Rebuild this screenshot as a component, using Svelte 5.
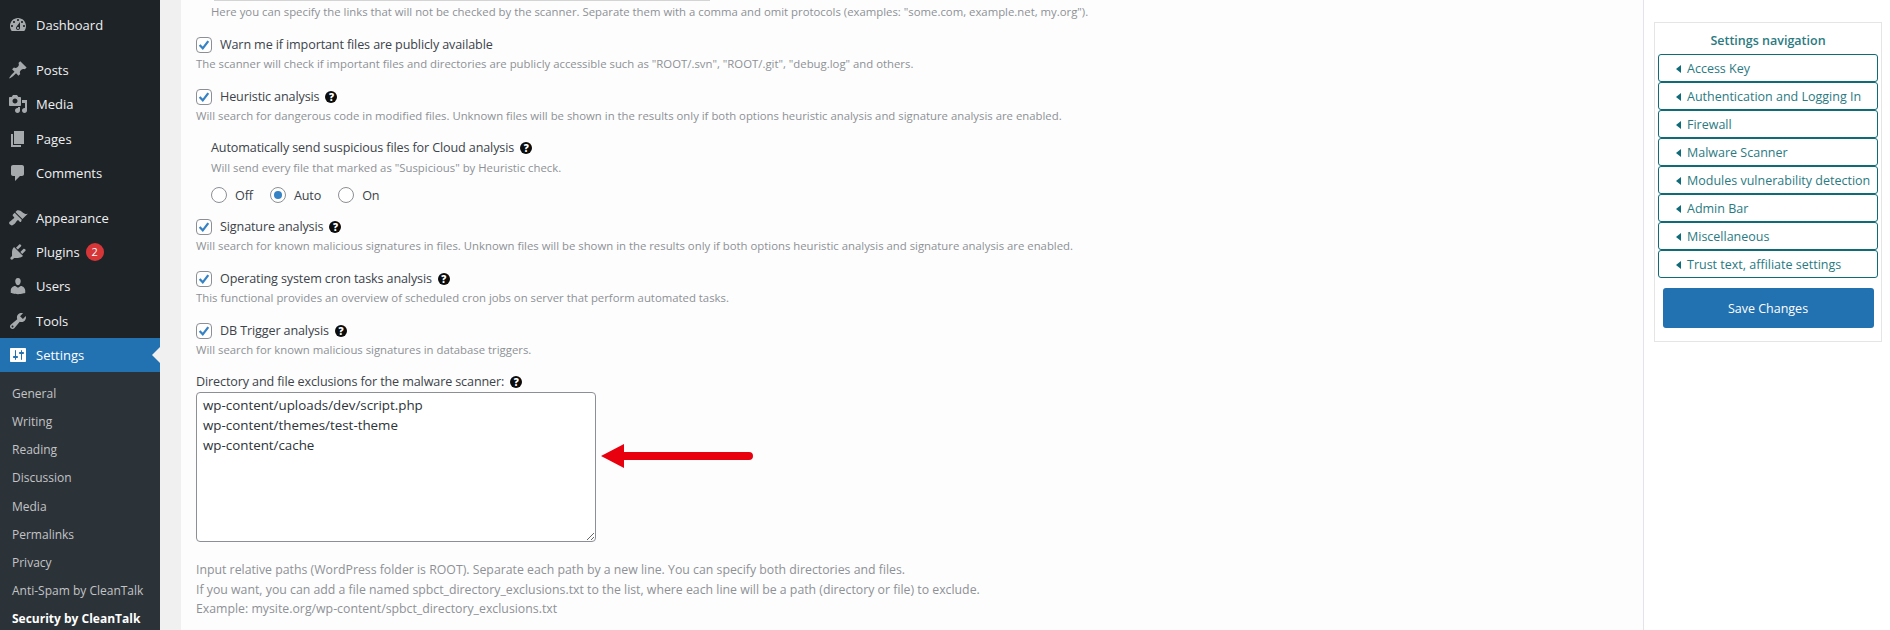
<script>
  const menuTop = [
    { label: 'Dashboard', gap: false, d: 'M3.76 16h12.48c1.1-1.37 1.76-3.11 1.76-5 0-4.42-3.58-8-8-8s-8 3.58-8 8c0 1.89.66 3.63 1.76 5zM10 4c.55 0 1 .45 1 1s-.45 1-1 1-1-.45-1-1 .45-1 1-1zM6 6c.55 0 1 .45 1 1s-.45 1-1 1-1-.45-1-1 .45-1 1-1zm8 0c.55 0 1 .45 1 1s-.45 1-1 1-1-.45-1-1 .45-1 1-1zm-5.37 5.55L12 7v6c0 1.1-.9 2-2 2s-2-.9-2-2c0-.57.24-1.08.63-1.45zM4 10c.55 0 1 .45 1 1s-.45 1-1 1-1-.45-1-1 .45-1 1-1zm12 0c.55 0 1 .45 1 1s-.45 1-1 1-1-.45-1-1 .45-1 1-1zm-5 3c0-.55-.45-1-1-1s-1 .45-1 1 .45 1 1 1 1-.45 1-1z' },
    { label: 'Posts', gap: true, d: 'M10.44 3.02l1.82-1.82 6.36 6.35-1.83 1.82c-1.05-.68-2.48-.57-3.41.36l-.75.75c-.92.93-1.04 2.35-.35 3.41l-1.83 1.82-2.41-2.41-2.8 2.79c-.42.42-3.38 2.71-3.8 2.29s1.86-3.39 2.28-3.81l2.79-2.79L4.1 9.36l1.83-1.82c1.05.69 2.48.57 3.4-.36l.75-.75c.93-.92 1.05-2.35.36-3.41z' },
    { label: 'Media', gap: false, d: 'M13 11V4c0-.55-.45-1-1-1h-1.67L9 1H5L3.67 3H2c-.55 0-1 .45-1 1v7c0 .55.45 1 1 1h10c.55 0 1-.45 1-1zM7 4.5c1.38 0 2.5 1.12 2.5 2.5S8.38 9.5 7 9.5 4.5 8.38 4.5 7 5.62 4.5 7 4.5zM14 6h5v10.5c0 1.38-1.12 2.5-2.5 2.5S14 17.88 14 16.5s1.12-2.5 2.5-2.5c.17 0 .34.02.5.05V9h-3V6zm-4 8.05V13h2v3.5c0 1.38-1.12 2.5-2.5 2.5S7 17.88 7 16.5 8.12 14 9.5 14c.17 0 .34.02.5.05z' },
    { label: 'Pages', gap: false, d: 'M6 15V2h10v13H6zm-1 1h8v2H3V5h2v11z' },
    { label: 'Comments', gap: false, d: 'M5 2h9c1.1 0 2 .9 2 2v7c0 1.1-.9 2-2 2h-2l-5 5v-5H5c-1.1 0-2-.9-2-2V4c0-1.1.9-2 2-2z' },
    { label: 'Appearance', gap: true, d: 'M14.48 11.06L7.41 3.99l1.5-1.5c.5-.56 2.3-.47 3.51.32 1.21.8 1.43 1.28 2.91 2.1 1.18.64 2.45 1.26 4.45.85zm-.71.71L6.7 4.7 4.93 6.47c-.39.39-.39 1.02 0 1.41l1.06 1.06c.39.39.39 1.03 0 1.42-.6.6-1.43 1.11-2.21 1.69-.35.26-.7.53-1.01.84C1.43 13.23.4 14.98 2 16.58c1.6 1.6 3.35.57 4.69-.77.31-.31.58-.66.84-1.01.58-.78 1.09-1.61 1.69-2.21.39-.39 1.03-.39 1.42 0l1.06 1.06c.39.39 1.02.39 1.41 0z' },
    { label: 'Plugins', gap: false, badge: '2', d: 'M13.11 4.36L9.87 7.6 8 5.73l3.24-3.24c.35-.34 1.05-.2 1.56.32.52.51.66 1.21.31 1.55zm-8 1.77l.91-1.12 9.01 9.01-1.19.84c-.71.71-2.63 1.16-3.82 1.16H6.14L4.9 17.26c-.59.59-1.54.59-2.12 0-.59-.58-.59-1.53 0-2.12l1.24-1.24v-3.88c0-1.13.4-3.19 1.09-3.89zm7.26 3.97l3.24-3.24c.34-.35 1.04-.21 1.55.31.52.51.66 1.21.31 1.55l-3.24 3.25z' },
    { label: 'Users', gap: false, d: 'M10 9.25c-2.27 0-2.73-3.44-2.73-3.44C7 4.02 7.82 2 9.97 2c2.16 0 2.98 2.02 2.71 3.81 0 0-.41 3.44-2.68 3.44zm0 2.57L12.72 10c2.39 0 4.52 2.33 4.52 4.53v2.49s-3.65 1.13-7.24 1.13c-3.65 0-7.24-1.13-7.24-1.13v-2.49c0-2.25 1.94-4.48 4.47-4.48z' },
    { label: 'Tools', gap: false, d: 'M16.68 9.77c-1.34 1.34-3.3 1.67-4.95.99l-5.41 6.52c-.99.99-2.59.99-3.58 0s-.99-2.59 0-3.57l6.52-5.42c-.68-1.65-.35-3.61.99-4.95 1.28-1.28 3.12-1.62 4.72-1.06l-2.89 2.89 2.82 2.82 2.86-2.87c.53 1.58.18 3.39-1.08 4.65zM3.81 16.21c.4.39 1.04.39 1.43 0 .4-.4.4-1.04 0-1.43-.39-.4-1.03-.4-1.43 0-.39.39-.39 1.03 0 1.43z' }
  ];
  const settingsIcon = 'M18 16V4c0-.55-.45-1-1-1H3c-.55 0-1 .45-1 1v12c0 .55.45 1 1 1h14c.55 0 1-.45 1-1zM8 11h1c.55 0 1 .45 1 1s-.45 1-1 1H8v1.5c0 .28-.22.5-.5.5s-.5-.22-.5-.5V13H6c-.55 0-1-.45-1-1s.45-1 1-1h1V5.5c0-.28.22-.5.5-.5s.5.22.5.5V11zm5-2h-1c-.55 0-1-.45-1-1s.45-1 1-1h1V5.5c0-.28.22-.5.5-.5s.5.22.5.5V7h1c.55 0 1 .45 1 1s-.45 1-1 1h-1v5.5c0 .28-.22.5-.5.5s-.5-.22-.5-.5V9z';
  const sub = ['General', 'Writing', 'Reading', 'Discussion', 'Media', 'Permalinks', 'Privacy', 'Anti-Spam by CleanTalk'];
  const nav = ['Access Key', 'Authentication and Logging In', 'Firewall', 'Malware Scanner', 'Modules vulnerability detection', 'Admin Bar', 'Miscellaneous', 'Trust text, affiliate settings'];
  const checks = [
    { label: 'Warn me if important files are publicly available', help: false, desc: 'The scanner will check if important files and directories are publicly accessible such as "ROOT/.svn", "ROOT/.git", "debug.log" and others.' },
    { label: 'Heuristic analysis', help: true, desc: 'Will search for dangerous code in modified files. Unknown files will be shown in the results only if both options heuristic analysis and signature analysis are enabled.' }
  ];
  const checks2 = [
    { label: 'Signature analysis', desc: 'Will search for known malicious signatures in files. Unknown files will be shown in the results only if both options heuristic analysis and signature analysis are enabled.' },
    { label: 'Operating system cron tasks analysis', desc: 'This functional provides an overview of scheduled cron jobs on server that perform automated tasks.' },
    { label: 'DB Trigger analysis', desc: 'Will search for known malicious signatures in database triggers.' }
  ];
  const radios = [
    { label: 'Off', on: false },
    { label: 'Auto', on: true },
    { label: 'On', on: false }
  ];
</script>

{#snippet help()}
  <span class="help">?</span>
{/snippet}

{#snippet check(item)}
  <div class="opt">
    <div class="opt-row">
      <span class="box">
        <svg viewBox="0 0 16 16" width="14" height="14"><path d="M3 8 6.6 11.8 12.9 3.6" fill="none" stroke="#3582c4" stroke-width="2.6"/></svg>
      </span>
      <span class="opt-label">{item.label}</span>
      {#if item.help !== false}{@render help()}{/if}
    </div>
    <div class="desc">{item.desc}</div>
  </div>
{/snippet}

<div class="page">
  <nav class="side">
    {#each menuTop as m}
      <div class="mi" class:gap={m.gap}>
        <svg class="mi-icon" viewBox="0 0 20 20" width="20" height="20"><path d={m.d} fill-rule="evenodd" /></svg>
        <span>{m.label}</span>
        {#if m.badge}<span class="badge">{m.badge}</span>{/if}
      </div>
    {/each}
    <div class="mi current">
      <svg class="mi-icon" viewBox="0 0 20 20" width="20" height="20"><path d={settingsIcon} fill-rule="evenodd" /></svg>
      <span>Settings</span>
      <i class="notch"></i>
    </div>
    <div class="submenu">
      {#each sub as s}<div class="si">{s}</div>{/each}
      <div class="si active">Security by CleanTalk</div>
    </div>
  </nav>

  <main class="panel">
    <div class="prev-field"></div>
    <div class="top-desc">Here you can specify the links that will not be checked by the scanner. Separate them with a comma and omit protocols (examples: "some.com, example.net, my.org").</div>

    {#each checks as c}{@render check(c)}{/each}

    <div class="sub-opt">
      <div class="sub-title"><span>Automatically send suspicious files for Cloud analysis</span>{@render help()}</div>
      <div class="desc">Will send every file that marked as "Suspicious" by Heuristic check.</div>
      <div class="radios">
        {#each radios as r}
          <span class="radio-item"><span class="radio" class:on={r.on}></span><span>{r.label}</span></span>
        {/each}
      </div>
    </div>

    {#each checks2 as c}{@render check(c)}{/each}

    <div class="excl-title"><span>Directory and file exclusions for the malware scanner:</span>{@render help()}</div>
    <div class="excl">
      <textarea class="ta" readonly>wp-content/uploads/dev/script.php
wp-content/themes/test-theme
wp-content/cache</textarea>
      <svg class="arrow" viewBox="0 0 152 24" width="152" height="24">
        <path d="M0 12 23 0V8H148a4 4 0 0 1 0 8H23V24Z" fill="#e8000f"/>
      </svg>
    </div>
    <div class="hints">
      <div>Input relative paths (WordPress folder is ROOT). Separate each path by a new line. You can specify both directories and files.</div>
      <div>If you want, you can add a file named spbct_directory_exclusions.txt to the list, where each line will be a path (directory or file) to exclude.</div>
      <div>Example: mysite.org/wp-content/spbct_directory_exclusions.txt</div>
    </div>
  </main>

  <aside class="aside">
    <div class="nav-card">
      <div class="nav-title">Settings navigation</div>
      <div class="nav-list">
        {#each nav as n}
          <div class="nav-btn"><i class="tri"></i><span>{n}</span></div>
        {/each}
      </div>
      <button class="save">Save Changes</button>
    </div>
  </aside>
</div>

<style>
  :global(body) {
    margin: 0;
    background: #f0f0f1;
    font-family: "Open Sans", "Noto Sans", sans-serif;
  }
  .page {
    display: flex;
    height: 630px;
    width: 1890px;
    overflow: hidden;
    font-family: "Open Sans", "Noto Sans", sans-serif;
  }
  .side {
    width: 160px;
    flex: none;
    background: #1d2327;
    padding-top: 8px;
    box-sizing: border-box;
  }
  .mi {
    position: relative;
    display: flex;
    align-items: center;
    height: 34.4px;
    padding-left: 8px;
    font-size: 13px;
    color: #f0f0f1;
    box-sizing: border-box;
  }
  .mi.gap { margin-top: 10.2px; }
  .mi-icon { fill: #a7aaad; margin-right: 8px; flex: none; }
  .mi.current { background: #2271b1; color: #fff; }
  .mi.current .mi-icon { fill: #fff; }
  .badge {
    margin-left: 6px;
    width: 18px;
    height: 18px;
    border-radius: 50%;
    background: #d63638;
    color: #fff;
    font-size: 11px;
    line-height: 18px;
    text-align: center;
  }
  .notch {
    position: absolute;
    right: 0;
    top: 50%;
    margin-top: -8px;
    border: 8px solid transparent;
    border-right-color: #f0f0f1;
    border-left-width: 0;
  }
  .submenu { background: #2c3338; padding: 7.6px 0 0; }
  .si {
    height: 28.2px;
    line-height: 28px;
    padding-left: 12px;
    font-size: 12px;
    color: #c3c4c7;
  }
  .si.active { color: #fff; font-weight: 700; }

  .panel {
    width: 1463px;
    flex: none;
    margin-left: 21px;
    box-sizing: border-box;
    background: #fdfdfd;
    border-right: 1px solid #e2e4e7;
    padding-left: 15px;
    color: #3c434a;
    font-size: 12.6px;
    letter-spacing: -0.13px;
  }
  .prev-field {
    width: 496px;
    height: 1px;
    margin-left: 18px;
    background: #d4d4d4;
  }
  .desc, .top-desc {
    font-size: 11.35px;
    color: #8d9196;
    letter-spacing: 0;
  }
  .top-desc { padding: 2px 0 0 15px; line-height: 18px; height: 20px; box-sizing: border-box; }
  .opt { margin-top: 15px; }
  .opt-row { display: flex; align-items: center; height: 18px; }
  .box {
    width: 16px;
    height: 16px;
    box-sizing: border-box;
    border: 1px solid #8c8f94;
    border-radius: 4px;
    background: #fff;
    display: flex;
    align-items: center;
    justify-content: center;
    flex: none;
    margin-right: 8px;
  }
  .opt-label { line-height: 18px; }
  .help {
    display: inline-block;
    width: 12px;
    height: 12px;
    margin-left: 6px;
    border-radius: 50%;
    background: #0c0c0c;
    color: #fff;
    font-size: 10px;
    font-weight: 800;
    line-height: 12px;
    text-align: center;
    letter-spacing: 0;
    flex: none;
  }
  .desc { line-height: 18px; margin-top: 1px; }
  .sub-opt { margin-top: 14px; margin-bottom: -1px; padding-left: 15px; }
  .sub-title, .excl-title { display: flex; align-items: center; line-height: 18px; }
  .sub-opt .desc { margin-top: 2px; }
  .radios { display: flex; gap: 17px; margin-top: 9px; height: 18px; align-items: center; }
  .radio-item { display: flex; align-items: center; gap: 8px; }
  .radio {
    width: 16px;
    height: 16px;
    box-sizing: border-box;
    border: 1px solid #8c8f94;
    border-radius: 50%;
    background: #fff;
    display: block;
    position: relative;
  }
  .radio.on::after {
    content: "";
    position: absolute;
    left: 3px;
    top: 3px;
    width: 8px;
    height: 8px;
    border-radius: 50%;
    background: #3582c4;
  }
  .excl-title { margin-top: 14px; }
  .excl { position: relative; margin-top: 1px; height: 150px; }
  .ta {
    display: block;
    width: 400px;
    height: 150px;
    box-sizing: border-box;
    border: 1px solid #8c8f94;
    border-radius: 4px;
    background: #fff;
    color: #2c3338;
    padding: 2px 6px;
    font: 13.35px/20px "Open Sans", "Noto Sans", sans-serif;
    outline: none;
  }
  .arrow { position: absolute; left: 405px; top: 52px; }
  .hints { margin-top: 18px; line-height: 19.5px; font-size: 12.3px; color: #8d9196; letter-spacing: 0; }

  .aside { flex: 1; background: #fff; padding: 22px 8px 0 10px; box-sizing: border-box; }
  .nav-card {
    width: 228px;
    height: 320px;
    box-sizing: border-box;
    border: 1px solid #e5e5e5;
    background: #fff;
    padding: 0 3px;
  }
  .nav-title {
    text-align: center;
    color: #2a7a82;
    font-weight: 600;
    font-size: 12.5px;
    height: 31px;
    line-height: 35px;
  }
  .nav-btn {
    height: 28px;
    box-sizing: border-box;
    border: 1px solid #0f6b78;
    border-radius: 3px;
    display: flex;
    align-items: center;
    color: #2a7a82;
    font-size: 12.5px;
    padding: 1px 0 0 17px;
    white-space: nowrap;
  }
  .tri {
    border: 4px solid transparent;
    border-right: 5px solid #0f6b78;
    border-left-width: 0;
    margin-right: 6px;
  }
  .save {
    display: block;
    width: 211px;
    height: 40px;
    margin: 10px auto 0;
    border: 0;
    border-radius: 3px;
    background: #2271b1;
    color: #fff;
    font: 12.5px "Open Sans", "Noto Sans", sans-serif;
  }
</style>
